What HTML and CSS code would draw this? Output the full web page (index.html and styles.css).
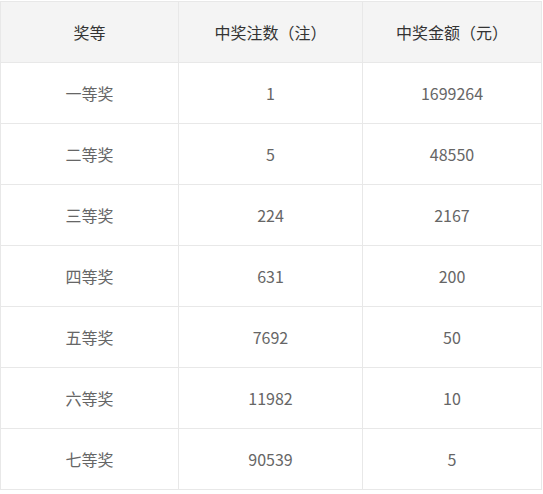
FILE: index.html
```html
<!DOCTYPE html>
<html lang="zh-CN">
<head>
<meta charset="utf-8">
<title>奖等</title>
<link rel="stylesheet" href="styles.css">
</head>
<body>
<table class="prize">
  <colgroup>
    <col class="c1"><col class="c2"><col class="c3">
  </colgroup>
  <thead>
    <tr><th>奖等</th><th>中奖注数（注）</th><th>中奖金额（元）</th></tr>
  </thead>
  <tbody>
    <tr><td>一等奖</td><td>1</td><td>1699264</td></tr>
    <tr><td>二等奖</td><td>5</td><td>48550</td></tr>
    <tr><td>三等奖</td><td>224</td><td>2167</td></tr>
    <tr><td>四等奖</td><td>631</td><td>200</td></tr>
    <tr><td>五等奖</td><td>7692</td><td>50</td></tr>
    <tr><td>六等奖</td><td>11982</td><td>10</td></tr>
    <tr><td>七等奖</td><td>90539</td><td>5</td></tr>
  </tbody>
</table>
</body>
</html>
```
FILE: styles.css
```css
html, body {
  margin: 0;
  padding: 0;
  background: #fff;
}
body {
  padding-top: 1px;
  font-family: "Noto Sans CJK SC", "Noto Sans", sans-serif;
  font-size: 16px;
}
.prize {
  border-collapse: collapse;
  table-layout: fixed;
  width: 541px;
}
.prize .c1 { width: 178px; }
.prize .c2 { width: 184px; }
.prize .c3 { width: 179px; }
.prize th,
.prize td {
  border: 1px solid #e8e8e8;
  height: 60px;
  padding: 0;
  text-align: center;
  vertical-align: middle;
  font-weight: normal;
  line-height: 20px;
}
.prize th {
  background: #f4f4f4;
  color: #333;
}
.prize td {
  color: #666;
}
```
